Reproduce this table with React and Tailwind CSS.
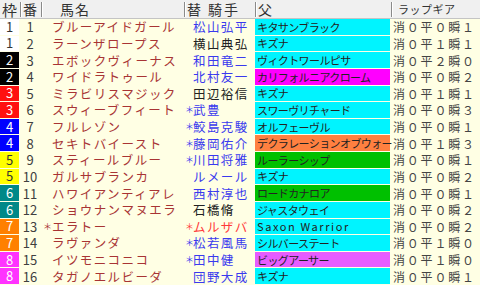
const COLS = 'grid grid-cols-[20px_21px_143px_71px_136px_89px]';

const FRAME = {
  1: 'bg-white text-[#333]',
  2: 'bg-black text-white',
  3: 'bg-[#ff1010] text-white',
  4: 'bg-[#0000ff] text-white',
  5: 'bg-[#ffff00] text-[#333]',
  6: 'bg-[#008888] text-white',
  7: 'bg-[#ff8000] text-white',
  8: 'bg-[#ff33ff] text-white',
};

const SIRE = {
  c: 'bg-[#00f4ff]',
  m: 'bg-[#ff00ff]',
  o: 'bg-[#ff8040]',
  g: 'bg-[#00c000]',
  v: 'bg-[#e65cff]',
};

const JOCKEY = {
  b: 'text-[#3a3aee]',
  k: 'text-[#222]',
  r: 'text-[#ff3a3a]',
};

const rows = [
  [1, 1, '', 'ブルーアイドガール', '', '松山弘平', 'b', 'キタサンブラック', 'c', '消０平０瞬１'],
  [1, 2, '', 'ラーンザロープス', '', '横山典弘', 'k', 'キズナ', 'c', '消０平１瞬１'],
  [2, 3, '', 'エボックヴィーナス', '', '和田竜二', 'b', 'ヴィクトワールピサ', 'c', '消０平２瞬０'],
  [2, 4, '', 'ワイドラトゥール', '', '北村友一', 'b', 'カリフォルニアクローム', 'm', '消０平０瞬２'],
  [3, 5, '', 'ミラビリスマジック', '', '田辺裕信', 'k', 'キズナ', 'c', '消０平１瞬１'],
  [3, 6, '', 'スウィーブフィート', '＊', '武豊', 'b', 'スワーヴリチャード', 'c', '消０平０瞬３'],
  [4, 7, '', 'フルレゾン', '＊', '鮫島克駿', 'b', 'オルフェーヴル', 'c', '消０平０瞬１'],
  [4, 8, '', 'セキトバイースト', '＊', '藤岡佑介', 'b', 'デクラレーションオブウォー', 'o', '消０平１瞬３'],
  [5, 9, '', 'スティールブルー', '＊', '川田将雅', 'b', 'ルーラーシップ', 'g', '消０平０瞬１'],
  [5, 10, '', 'ガルサブランカ', '', 'ルメール', 'b', 'キズナ', 'c', '消０平０瞬２'],
  [6, 11, '', 'ハワイアンティアレ', '', '西村淳也', 'b', 'ロードカナロア', 'g', '消０平０瞬１'],
  [6, 12, '', 'ショウナンマヌエラ', '', '石橋脩', 'k', 'ジャスタウェイ', 'c', '消０平０瞬２'],
  [7, 13, '＊', 'エラトー', '＊', 'ムルザバ', 'r', 'Saxon Warrior', 'c', '消０平０瞬２'],
  [7, 14, '', 'ラヴァンダ', '＊', '松若風馬', 'b', 'シルバーステート', 'c', '消０平１瞬０'],
  [8, 15, '', 'イツモニコニコ', '＊', '田中健', 'b', 'ビッグアーサー', 'v', '消０平１瞬０'],
  [8, 16, '', 'タガノエルビーダ', '', '団野大成', 'b', 'キズナ', 'c', '消０平０瞬１'],
];

const font = "font-['Noto_Sans_CJK_JP',sans-serif]";

function HeadCell({ children, sep = true, className = '' }) {
  return (
    <div className="flex items-center h-full">
      {sep && <div className="h-[15px] w-[2px] border-l border-[#8a8a8a] border-r border-r-white shrink-0" />}
      <div className={`flex items-center ${className}`}>{children}</div>
    </div>
  );
}

export default function App() {
  return (
    <div className={`w-[480px] h-[285px] bg-[#ffffe4] flex flex-col ${font}`}>
      <div className={`${COLS} h-[19px] bg-[#f0f0f0] border-b border-[#c4c4c4] text-[#333] text-[14px] leading-none`}>
        <HeadCell sep={false} className="pl-[2px] text-[15px]">枠</HeadCell>
        <HeadCell className="pl-[1px]">番</HeadCell>
        <HeadCell className="pl-[17px] tracking-[1px]">馬名</HeadCell>
        <HeadCell className="pl-[1px]">替<span className="ml-[7px] tracking-[2px]">騎手</span></HeadCell>
        <HeadCell className="pl-[1px]">父</HeadCell>
        <HeadCell className="pl-[5px] text-[11px] tracking-[0.5px]">ラップギア</HeadCell>
      </div>
      <div className="flex-1 grid grid-rows-16">
        {rows.map(([fr, no, hm, horse, jm, jockey, jc, sire, sc, lap]) => (
          <div key={no} className={`${COLS} leading-[14px]`}>
            <div className={`${FRAME[fr]} border-b border-r border-[#ffffe4] flex items-center justify-center text-[13px]`}>{fr}</div>
            <div className="flex items-center justify-center text-[13px] text-[#404040] pr-[1px]">{no}</div>
            <div className="flex items-center text-[12.5px] tracking-[1.4px] text-[#a83434] whitespace-nowrap">
              <span className="w-[11px] pl-[2px] shrink-0 text-[9px] tracking-normal">{hm}</span>
              {horse}
            </div>
            <div className={`flex items-center text-[12.5px] tracking-[1.4px] whitespace-nowrap ${JOCKEY[jc]}`}>
              <span className="w-[9px] pl-[1px] shrink-0 text-[9px] tracking-normal">{jm}</span>
              {jockey}
            </div>
            <div className={`${SIRE[sc]} border-b border-r border-[#ffffe4] flex items-center pl-[2px] text-[11px] text-[#222] whitespace-nowrap ${sire === 'Saxon Warrior' ? 'tracking-[1.6px]' : 'tracking-[-0.6px]'}`}>{sire}</div>
            <div className="flex items-center pl-[2px] text-[12px] tracking-[1.8px] text-[#444] whitespace-nowrap">{lap}</div>
          </div>
        ))}
      </div>
    </div>
  );
}
